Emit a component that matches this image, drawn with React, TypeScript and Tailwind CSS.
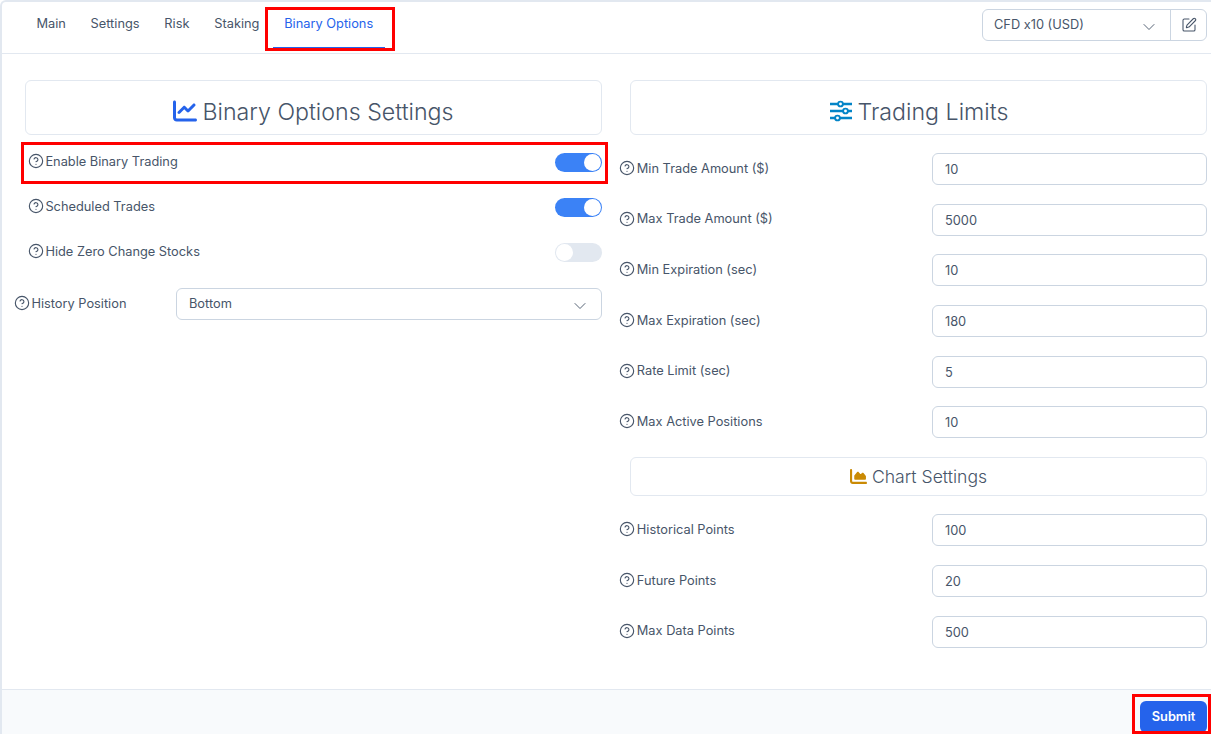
import { ChevronDown, CircleHelp, SquarePen } from 'lucide-react';
import { FaChartArea, FaChartLine } from 'react-icons/fa6';

const limits = [
  { label: 'Min Trade Amount ($)', value: '10' },
  { label: 'Max Trade Amount ($)', value: '5000' },
  { label: 'Min Expiration (sec)', value: '10' },
  { label: 'Max Expiration (sec)', value: '180' },
  { label: 'Rate Limit (sec)', value: '5' },
  { label: 'Max Active Positions', value: '10' },
];

const chartPoints = [
  { label: 'Historical Points', value: '100' },
  { label: 'Future Points', value: '20' },
  { label: 'Max Data Points', value: '500' },
];

const tabs = ['Main', 'Settings', 'Risk', 'Staking'];

const Label = ({ text }: { text: string }) => (
  <span className="mb-[1px] flex items-center gap-[1.4px] text-[12.8px] leading-5 text-[#475569]">
    <CircleHelp className="-mt-[1px] w-4 h-4" strokeWidth={1.7} />
    {text}
  </span>
);

const Toggle = ({ on }: { on: boolean }) => (
  <span className={`flex h-[19px] w-[47px] rounded-full p-[1px] ${on ? 'justify-end bg-[#3b82f6]' : 'justify-start bg-[#e2e8f0]'}`}>
    <span className="h-[17px] w-[17px] rounded-full bg-white" />
  </span>
);

const SliderIcon = () => (
  <svg viewBox="0 0 24 24" className="mb-[3px] w-6 h-6 text-[#0284c7]" fill="none" stroke="currentColor" strokeWidth="2.6">
    <path d="M1 5h8M14 5h9M1 12h13M19 12h4M1 19h5M11 19h12" />
    <circle cx="11.5" cy="5" r="2.4" strokeWidth="1.9" />
    <circle cx="16.5" cy="12" r="2.4" strokeWidth="1.9" />
    <circle cx="8.5" cy="19" r="2.4" strokeWidth="1.9" />
  </svg>
);

const LimitRow = ({ label, value }: { label: string; value: string }) => (
  <div className="flex items-center justify-between -ml-[10.6px]">
    <Label text={label} />
    <div className="flex h-8 w-[275px] items-center rounded-md border border-[#cbd5e1] bg-white px-3 pt-[1px] text-[12.8px] text-[#475569]">
      {value}
    </div>
  </div>
);

export default function App() {
  return (
    <div className="relative h-[734px] w-[1211px] overflow-hidden bg-white font-['Inter',sans-serif]">
      <div className="flex h-full flex-col border-l-2 border-t-2 border-[#e2e8f0] rounded-tl-md">
        {/* Tabs */}
        <div className="flex h-[52px] shrink-0 items-start justify-between border-b border-[#e2e8f0] pr-1">
          <div className="flex pl-[22px] text-[12.8px] text-[#475569]">
            {tabs.map((tab) => (
              <span key={tab} className="px-[12.4px] pb-3 pt-3 leading-5">{tab}</span>
            ))}
            <span className="ml-[0.9px] h-[46px] border-b border-[#2563eb] px-[11.5px] pb-3 pt-3 leading-5 text-[#2563eb]">Binary Options</span>
          </div>
          <div className="mt-[7px] flex h-8 w-[225px] rounded-md border border-[#cbd5e1] text-[#475569]">
            <div className="flex flex-1 items-center justify-between pl-[11px] pr-[11px] text-[12.8px]">
              CFD x10 (USD)
              <ChevronDown className="mt-[3px] w-5 h-5" strokeWidth={1.1} />
            </div>
            <div className="flex w-9 items-center justify-center border-l border-[#cbd5e1]">
              <SquarePen className="w-4 h-4" strokeWidth={1.6} />
            </div>
          </div>
        </div>

        {/* Form */}
        <div className="grid flex-1 grid-cols-[577px_577px] gap-x-7 pl-[23px] pt-[26px]">
          <div className="flex flex-col">
            <div className="flex h-[55px] items-center justify-center gap-[5px] rounded-md border border-[#e2e8f0] pt-[10px] text-[23.2px] font-light text-[#475569]">
              <FaChartLine className="mb-[3px] w-6 h-6 text-[#2563eb]" />
              Binary Options Settings
            </div>
            <div className="mt-[17px] flex flex-col gap-[25px] pl-[3px]">
              {[
                { label: 'Enable Binary Trading', on: true },
                { label: 'Scheduled Trades', on: true },
                { label: 'Hide Zero Change Stocks', on: false },
              ].map((row) => (
                <div key={row.label} className="flex h-5 items-center justify-between">
                  <Label text={row.label} />
                  <Toggle on={row.on} />
                </div>
              ))}
            </div>
            <div className="-ml-[11px] mt-[26px] flex items-center justify-between">
              <Label text="History Position" />
              <div className="flex h-8 w-[426px] items-center justify-between rounded-md border border-[#cbd5e1] pl-3 pr-[11px] text-[12.8px] text-[#475569]">
                Bottom
                <ChevronDown className="mt-[3px] w-5 h-5" strokeWidth={1.1} />
              </div>
            </div>
          </div>

          <div className="flex flex-col">
            <div className="flex h-[55px] items-center justify-center gap-[5px] rounded-md border border-[#e2e8f0] pt-[10px] text-[23.2px] font-light text-[#475569]">
              <SliderIcon />
              Trading Limits
            </div>
            <div className="mt-[18px] flex flex-col gap-[18.7px]">
              {limits.map((row) => (
                <LimitRow key={row.label} {...row} />
              ))}
            </div>
            <div className="mt-[19px] flex h-[39px] items-center justify-center gap-[5px] rounded-md border border-[#e2e8f0] text-[17.6px] font-light text-[#475569]">
              <FaChartArea className="w-[17px] h-[17px] text-[#ca8a04]" />
              Chart Settings
            </div>
            <div className="mt-[18px] flex flex-col gap-[18.7px]">
              {chartPoints.map((row) => (
                <LimitRow key={row.label} {...row} />
              ))}
            </div>
          </div>
        </div>

        {/* Footer */}
        <div className="flex h-[45px] shrink-0 items-start justify-end border-t border-[#e2e8f0] bg-[#f8fafc] pr-1 pt-[11px]">
          <button className="h-8 w-[67px] rounded-md bg-[#2563eb] text-[12.8px] font-semibold text-white">Submit</button>
        </div>
      </div>

      {/* Red annotation boxes */}
      <div className="absolute left-[265px] top-[7px] h-[44px] w-[130px] border-[3px] border-[#ff0000]" />
      <div className="absolute left-[21px] top-[142px] h-[42px] w-[587px] border-[3px] border-[#ff0000]" />
      <div className="absolute left-[1132px] top-[694px] h-[40px] w-[79px] border-[3px] border-[#ff0000]" />
    </div>
  );
}
